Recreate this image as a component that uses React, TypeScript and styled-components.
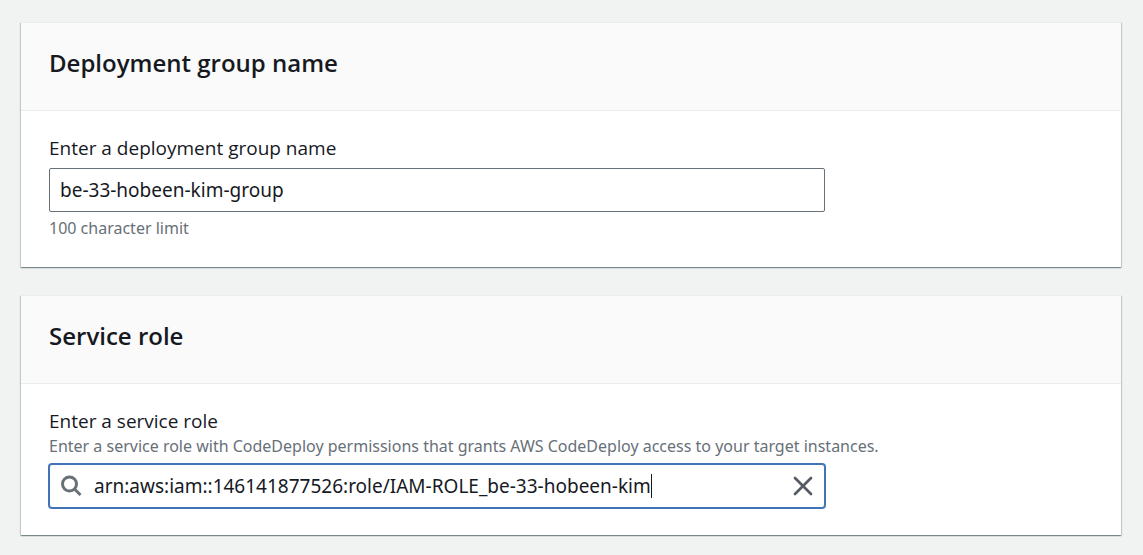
import { useState } from "react";
import type { ReactNode } from "react";
import styled, { createGlobalStyle } from "styled-components";

const GlobalStyle = createGlobalStyle`
  * { box-sizing: border-box; }
  body {
    margin: 0;
    background: #f1f3f3;
    color: #16191f;
    font-family: "Open Sans", "Noto Sans", sans-serif;
  }
`;

const Page = styled.main`
  display: flex;
  flex-direction: column;
  gap: 28px;
  padding: 22px 22px 20px 21px;
`;

const Card = styled.section`
  background: #fff;
  border-top: 1px solid #eaeded;
  box-shadow:
    0 1px 1px 0 rgba(0, 28, 36, 0.3),
    1px 1px 1px 0 rgba(0, 28, 36, 0.15),
    -1px 1px 1px 0 rgba(0, 28, 36, 0.15);
`;

const CardHeader = styled.header`
  padding: 24px 28px 31px;
  background: #fafafa;
  border-bottom: 1px solid #eaeded;
`;

const Title = styled.h2`
  margin: 0;
  font-size: 24px;
  line-height: 32px;
  font-weight: 650;
`;

const CardBody = styled.div`
  display: flex;
  flex-direction: column;
  align-items: flex-start;
  padding: 23px 28px 27px;
`;

const Label = styled.label`
  font-size: 19px;
  line-height: 28px;
`;

const Hint = styled.p`
  margin: 0;
  color: #687078;
  font-family: "Noto Sans", sans-serif;
  font-size: 16px;
  line-height: 23px;
`;

const Field = styled.div<{ $active?: boolean }>`
  display: flex;
  align-items: center;
  width: 100%;
  max-width: 776px;
  height: 44px;
  margin-top: 6px;
  padding: 0 10px;
  background: #fff;
  border: 1px solid ${(p) => (p.$active ? "#4272b8" : "#687078")};
  border-radius: ${(p) => (p.$active ? "3px" : "2px")};
  box-shadow: ${(p) => (p.$active ? "0 0 0 1px #4272b8" : "none")};

  & + ${Hint} {
    margin-top: 5px;
  }
`;

const TextInput = styled.input<{ $fit?: boolean }>`
  flex: ${(p) => (p.$fit ? "0 1 auto" : "1")};
  field-sizing: ${(p) => (p.$fit ? "content" : "fixed")};
  min-width: 0;
  padding: 0;
  border: 0;
  outline: 0;
  background: transparent;
  color: inherit;
  font-family: "Noto Sans", sans-serif;
  font-size: 19px;
  line-height: 28px;
`;

const SearchIcon = styled.svg`
  flex: none;
  width: 22px;
  height: 22px;
  margin-right: 12px;
`;

const Caret = styled.span`
  flex: none;
  width: 1px;
  height: 24px;
  background: #16191f;
`;

const ClearButton = styled.button`
  display: flex;
  flex: none;
  margin-left: auto;
  padding: 0;
  border: 0;
  background: transparent;
  cursor: pointer;
`;

function Panel({ title, children }: { title: string; children: ReactNode }) {
  return (
    <Card>
      <CardHeader>
        <Title>{title}</Title>
      </CardHeader>
      <CardBody>{children}</CardBody>
    </Card>
  );
}

export default function App() {
  const [name, setName] = useState("be-33-hobeen-kim-group");
  const [role, setRole] = useState(
    "arn:aws:iam::146141877526:role/IAM-ROLE_be-33-hobeen-kim"
  );

  return (
    <>
      <GlobalStyle />
      <Page>
        <Panel title="Deployment group name">
          <Label htmlFor="group-name">Enter a deployment group name</Label>
          <Field>
            <TextInput
              id="group-name"
              type="text"
              maxLength={100}
              spellCheck={false}
              aria-describedby="group-name-hint"
              value={name}
              onChange={(e) => setName(e.target.value)}
            />
          </Field>
          <Hint id="group-name-hint">100 character limit</Hint>
        </Panel>

        <Panel title="Service role">
          <Label htmlFor="service-role">Enter a service role</Label>
          <Hint id="service-role-hint">
            Enter a service role with CodeDeploy permissions that grants AWS
            CodeDeploy access to your target instances.
          </Hint>
          <Field $active>
            <SearchIcon viewBox="0 0 22 22" fill="none" aria-hidden="true">
              <circle cx="9.5" cy="9" r="7" stroke="#687078" strokeWidth="3" />
              <path d="M14.5 14l6 6" stroke="#687078" strokeWidth="3" />
            </SearchIcon>
            <TextInput
              id="service-role"
              $fit
              type="text"
              spellCheck={false}
              aria-describedby="service-role-hint"
              value={role}
              onChange={(e) => setRole(e.target.value)}
            />
            <Caret aria-hidden="true" />
            <ClearButton
              type="button"
              aria-label="Clear"
              onClick={() => setRole("")}
            >
              <svg width="22" height="22" viewBox="0 0 22 22" fill="none">
                <path
                  d="M3 3l16 16M19 3L3 19"
                  stroke="#545b64"
                  strokeWidth="2.7"
                  strokeLinecap="round"
                />
              </svg>
            </ClearButton>
          </Field>
        </Panel>
      </Page>
    </>
  );
}
